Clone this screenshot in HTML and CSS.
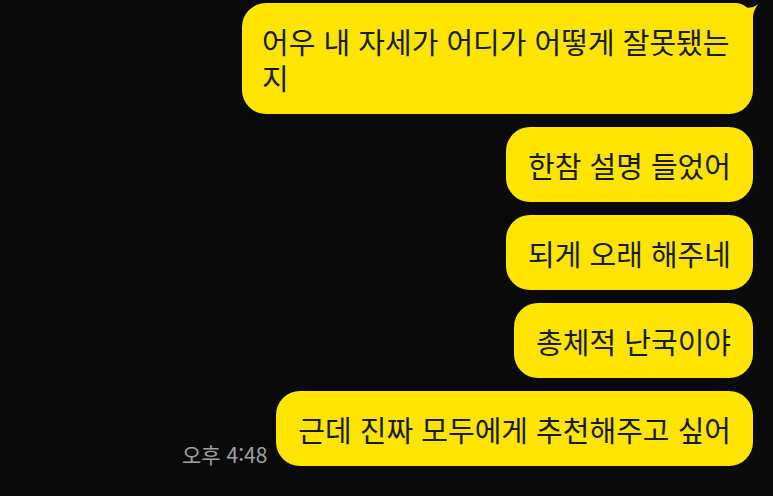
FILE: index.html
```html
<!DOCTYPE html>
<html lang="ko">
<head>
<meta charset="utf-8">
<link rel="stylesheet" href="styles.css">
</head>
<body>
<div class="chat">
  <div class="row">
    <div class="bubble first">어우 내 자세가 어디가 어떻게 잘못됐는 지<svg class="tail" viewBox="-18 0 24 20" width="24" height="20"><path d="M-18,0 L-17,0 C-12,4 -4,8 5.5,1 C1.5,6 0,10 0,16 L0,20 L-18,20 Z" fill="#FEE500"/></svg></div>
  </div>
  <div class="row"><div class="bubble">한참 설명 들었어</div></div>
  <div class="row"><div class="bubble">되게 오래 해주네</div></div>
  <div class="row"><div class="bubble">총체적 난국이야</div></div>
  <div class="row">
    <span class="time">오후 4:48</span>
    <div class="bubble">근데 진짜 모두에게 추천해주고 싶어</div>
  </div>
</div>
</body>
</html>
```
FILE: styles.css
```css
html, body {
  margin: 0;
  padding: 0;
  background: #0a0a0a;
  height: 100%;
}
body {
  font-family: "Noto Sans CJK KR", "Noto Sans", sans-serif;
}
.chat {
  display: flex;
  flex-direction: column;
  align-items: flex-end;
  gap: 13px;
  padding: 3px 20px 0 0;
}
.row {
  display: flex;
  align-items: flex-end;
  gap: 9px;
}
.bubble {
  position: relative;
  box-sizing: border-box;
  background: #FEE500;
  color: #1b1b1b;
  font-size: 29px;
  line-height: 36px;
  padding: 20px 22px 19px 22px;
  border-radius: 24px;
  white-space: normal;
}
.bubble.first {
  max-width: 511px;
  padding-left: 20px;
  border-top-right-radius: 18px;
}
.tail {
  position: absolute;
  top: 0;
  right: -6px;
  display: block;
}
.time {
  font-size: 21px;
  line-height: 24px;
  color: #a0a0a0;
}
```
